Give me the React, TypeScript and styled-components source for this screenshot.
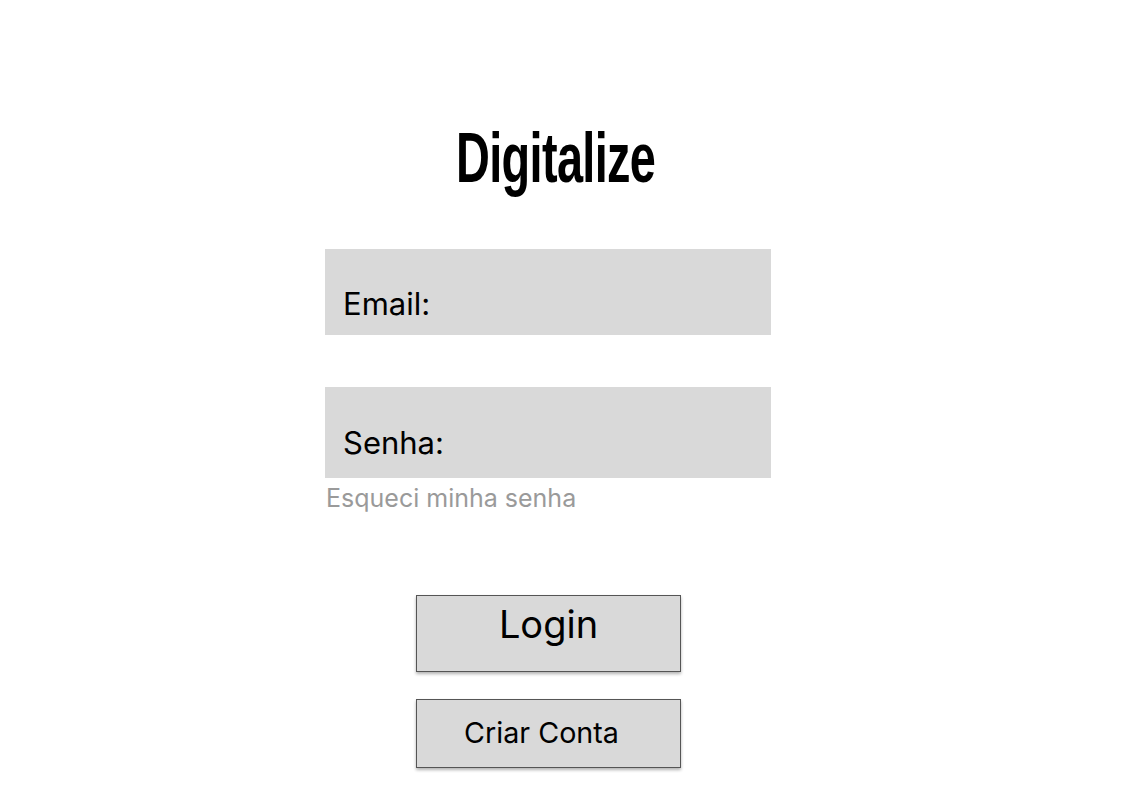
import React from "react";
import styled, { createGlobalStyle } from "styled-components";

const Global = createGlobalStyle`
  html, body { margin: 0; padding: 0; background: #ffffff; }
  body { font-family: Inter, "Noto Sans", sans-serif; color: #000; }
`;

const Page = styled.div`
  width: 1137px;
  height: 810px;
  display: flex;
  flex-direction: column;
  padding-left: 325px;
  box-sizing: border-box;
`;

const Column = styled.div`
  width: 446px;
  display: flex;
  flex-direction: column;
`;

const TitleRow = styled.div`
  display: flex;
  justify-content: center;
  padding-left: 16px;
  margin-top: 118px;
  height: 131px;
`;

const Title = styled.h1`
  margin: 0;
  font-family: "Liberation Sans", Arial, sans-serif;
  font-weight: 700;
  font-size: 70px;
  line-height: 80px;
  letter-spacing: -1px;
  transform: scaleX(0.67);
  white-space: nowrap;
`;

const Field = styled.div<{ $h: number; $pb: number }>`
  height: ${(p) => p.$h}px;
  background: #d9d9d9;
  display: flex;
  align-items: flex-end;
  padding: 0 0 ${(p) => p.$pb}px 18px;
  box-sizing: border-box;
  font-size: 31px;
  line-height: 36px;
`;

const Gap = styled.div<{ $h: number }>`
  height: ${(p) => p.$h}px;
`;

const Forgot = styled.a`
  font-size: 25px;
  line-height: 40px;
  color: #9a9a9a;
  padding-left: 1px;
  cursor: pointer;
`;

const Buttons = styled.div`
  display: flex;
  flex-direction: column;
  padding-left: 91px;
  gap: 27px;
  margin-top: 77px;
`;

const Button = styled.button<{ $h: number; $size: number; $pt: number; $shift: number }>`
  width: 265px;
  height: ${(p) => p.$h}px;
  background: #d9d9d9;
  border: 1px solid #555;
  box-shadow: 0 2px 3px rgba(0, 0, 0, 0.3);
  font-family: Inter, sans-serif;
  font-size: ${(p) => p.$size}px;
  color: #000;
  display: flex;
  justify-content: center;
  align-items: flex-start;
  padding: ${(p) => p.$pt}px ${(p) => (p.$shift > 0 ? 0 : -p.$shift)}px 0 ${(p) => (p.$shift > 0 ? p.$shift : 0)}px;
  box-sizing: border-box;
  line-height: 1.2;
  cursor: pointer;
`;

export default function App() {
  return (
    <>
      <Global />
      <Page>
        <Column>
          <TitleRow>
            <Title>Digitalize</Title>
          </TitleRow>
          <Field $h={86} $pb={13}>Email:</Field>
          <Gap $h={52} />
          <Field $h={91} $pb={17}>Senha:</Field>
          <Forgot>Esqueci minha senha</Forgot>
          <Buttons>
            <Button $h={77} $size={38} $pt={6} $shift={0}>Login</Button>
            <Button $h={69} $size={28.7} $pt={16} $shift={-14}>Criar Conta</Button>
          </Buttons>
        </Column>
      </Page>
    </>
  );
}
